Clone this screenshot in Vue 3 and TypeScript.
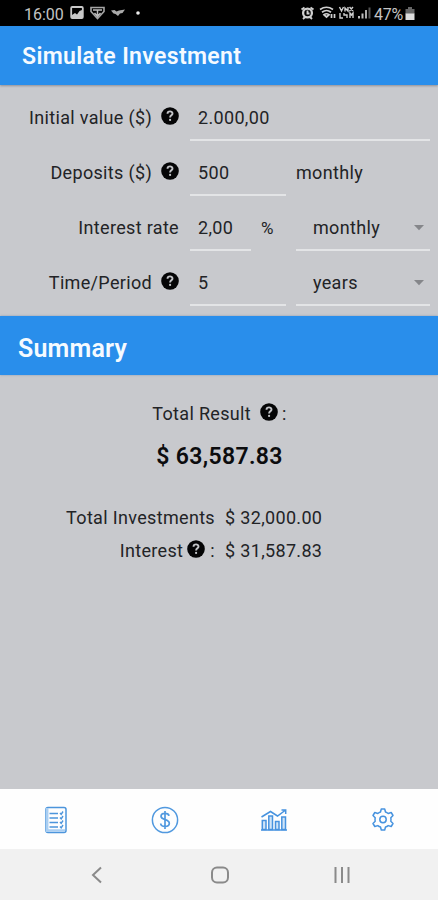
<script setup lang="ts">
import { h, type FunctionalComponent } from 'vue'

interface Field {
  label: string
  help: boolean
  value: string
  size: 'wide' | 'mid' | 'short'
  suffix?: string
  plain?: string
  select?: string
}

const fields: Field[] = [
  { label: 'Initial value ($)', help: true, value: '2.000,00', size: 'wide' },
  { label: 'Deposits ($)', help: true, value: '500', size: 'mid', plain: 'monthly' },
  { label: 'Interest rate', help: false, value: '2,00', size: 'short', suffix: '%', select: 'monthly' },
  { label: 'Time/Period', help: true, value: '5', size: 'mid', select: 'years' },
]

const HelpIcon: FunctionalComponent = () =>
  h('svg', { width: 18, height: 18, viewBox: '0 0 18 18' }, [
    h('circle', { cx: 9, cy: 9, r: 8.8, fill: '#050506' }),
    h('path', {
      d: 'M6.5 6.7C6.6 3.6 11.6 3.7 11.5 6.6C11.4 8.4 9.1 8.3 9.1 10.4',
      fill: 'none',
      stroke: '#c4c5c9',
      'stroke-width': 1.9,
    }),
    h('circle', { cx: 9.1, cy: 12.9, r: 1.1, fill: '#c4c5c9' }),
  ])
</script>

<template>
  <div class="screen">
    <div class="status">
      <span class="clock">16:00</span>
      <svg class="st-left" width="74" height="16" viewBox="0 0 74 16">
        <rect x="1.2" y="2" width="11.6" height="11" rx="1" fill="none" stroke="#c9c9c9" stroke-width="1.8" />
        <path d="M2 12.500V10L5 8L7 9.500L9.500 6L12 5V12.500Z" fill="#c9c9c9" />
        <path d="M21 2.500H34V6.500L27.500 13.500L21 6.500Z" fill="none" stroke="#a5a5a5" stroke-width="1.600" />
        <path d="M23 5H32M27.500 5V12M24.500 8L27.500 11.500L30.500 8" fill="none" stroke="#b9b9b9" stroke-width="1.500" />
        <path d="M41 5.500L44.500 5L46.500 6.500L49 5.500L55 4.500L52.500 8L50 8.500L48 11L45.500 9L43.500 8.500Z" fill="#aaa" />
        <circle cx="68" cy="8" r="1.800" fill="#ededed" />
      </svg>
      <svg class="st-right" width="72" height="16" viewBox="0 0 72 16">
        <g fill="none" stroke="#d0d0d0">
          <circle cx="7.500" cy="8" r="4.400" stroke-width="2.300" />
          <path d="M1.500 4.500L4.500 2.500M10.500 2.500L13.500 4.500M3 14L5 12M12 14L10 12M7.500 5.500V8.500H9.500" stroke-width="1.900" />
          <path d="M20 4.500Q26.500 0 33 4.500M22 7.200Q26.500 3.800 31 7.200M24 9.700Q26.500 7.800 29 9.700L26.500 12Z" stroke-width="1.700" />
          <path d="M31.500 9V13M34.500 9V13" stroke-width="1.700" />
          <path d="M39.500 2L41.500 6L43.500 2M45 6.500V3L48 6V2M49.500 2L53 6M53 2L49.500 6M40 8V13H43M44 8V10H47V13M50 13V8L51.500 10L53 8V13" stroke-width="1.400" />
        </g>
        <path d="M58 11H60V13.500H58ZM61.500 8.500H63.500V13.500H61.500Z" fill="#bdbdbd" />
        <path d="M65 5H67V13.500H65Z" fill="#aaa" />
        <path d="M68.500 2.500H70.500V13.500H68.500Z" fill="#555" />
      </svg>
      <span class="percent">47%</span>
      <svg class="battery" width="10" height="15" viewBox="0 0 10 15">
        <path d="M3 1H7V3H9.500V8H.5V3H3Z" fill="#666" />
        <path d="M.5 7.500H9.500V14H.5Z" fill="#dedede" />
      </svg>
    </div>

    <header class="appbar">Simulate Investment</header>

    <section class="form">
      <div v-for="f in fields" :key="f.label" class="row">
        <div class="label">
          <span>{{ f.label }}</span>
          <HelpIcon v-if="f.help" class="help" />
        </div>
        <div class="input" :class="f.size">{{ f.value }}</div>
        <div v-if="f.suffix" class="suffix">{{ f.suffix }}</div>
        <div v-if="f.plain" class="plain">{{ f.plain }}</div>
        <div v-if="f.select" class="select">
          <span>{{ f.select }}</span>
          <svg width="10" height="6" viewBox="0 0 10 6"><path d="M0 0H10L5 5.300Z" fill="#85868a" /></svg>
        </div>
      </div>
    </section>

    <h2 class="summary">Summary</h2>

    <main class="results">
      <div class="result-title"><span>Total Result</span><HelpIcon class="help" /><span>:</span></div>
      <div class="total">$ 63,587.83</div>
      <div class="line">
        <div class="name">Total Investments</div>
        <div class="amount">$ 32,000.00</div>
      </div>
      <div class="line">
        <div class="name"><span>Interest</span><HelpIcon class="help" /><span>:</span></div>
        <div class="amount">$ 31,587.83</div>
      </div>
    </main>

    <nav class="tabs">
      <div class="tab">
        <svg width="28" height="28" viewBox="0 0 28 28" fill="none" stroke="#4c95dc">
          <rect x="4" y="1.500" width="20" height="25" rx="2" stroke-width="1.500" />
          <path d="M5.200 2V26M5 24.500H23" stroke="#a9cef2" stroke-width="2.500" />
          <path d="M7.500 7.500H16M7.500 12H16M7.500 16.500H16M7.500 21H16" stroke-width="1.500" />
          <path d="M18 7L19.200 8.300L21 5.500M18 11.500L19.200 12.800L21 10M18 16L19.200 17.300L21 14.500M18 20.500L19.200 21.800L21 19" stroke-width="1.400" />
        </svg>
      </div>
      <div class="tab">
        <svg width="28" height="28" viewBox="0 0 28 28" fill="none" stroke="#5199df" stroke-width="1.500">
          <circle cx="14" cy="14" r="12.600" />
          <path d="M18 9.800C17.500 6.500 10 6.300 10 10.300C10 14.500 18.300 12.800 18.300 17.300C18.300 21.600 10 21.400 9.700 17.500M14 5V23" stroke-width="1.700" />
        </svg>
      </div>
      <div class="tab">
        <svg width="28" height="28" viewBox="0 0 28 28" fill="none" stroke="#4793df" stroke-width="1.500">
          <path d="M2.300 23.500V14.500H6V23.500ZM8.800 23.500V10H12.500V23.500ZM15.500 23.500V15.500H19V23.500ZM21.800 23.500V11H25.500V23.500Z" fill="#cfe4f8" />
          <path d="M1 24H27M1.500 11L10.500 5.500L17.500 10L25 4.500M21.500 4H25.700V8" />
        </svg>
      </div>
      <div class="tab">
        <svg width="28" height="28" viewBox="0 0 28 28" fill="none" stroke="#4793df" stroke-width="1.500" stroke-linejoin="round">
          <path d="M12.300 3H15.700L16.500 6Q18 6.500 19.200 7.500L22.200 6.500L24 9.500L21.800 11.700Q22.200 13.500 21.800 15.300L24 17.500L22.200 20.500L19.200 19.600Q18 20.600 16.500 21L15.700 24H12.300L11.500 21Q10 20.600 8.800 19.600L5.800 20.500L4 17.500L6.200 15.300Q5.800 13.500 6.200 11.700L4 9.500L5.800 6.500L8.800 7.500Q10 6.500 11.500 6Z" />
          <circle cx="14" cy="13.500" r="3.200" />
        </svg>
      </div>
    </nav>

    <div class="sysnav">
      <svg width="20" height="20" viewBox="0 0 20 20"><path d="M14 2.500L6 10L14 17.500" /></svg>
      <svg width="20" height="20" viewBox="0 0 20 20"><rect x="2" y="2.500" width="16" height="15" rx="5" /></svg>
      <svg width="20" height="20" viewBox="0 0 20 20"><path d="M3.500 2V18M10 2V18M16.500 2V18" /></svg>
    </div>
  </div>
</template>

<style>
body {
  margin: 0;
}
</style>

<style scoped>
.screen {
  width: 438px;
  height: 900px;
  display: flex;
  flex-direction: column;
  overflow: hidden;
  background: #c8c9cd;
  font-family: Roboto, "Liberation Sans", sans-serif;
  font-size: 18px;
  letter-spacing: 0.33px;
  color: #222326;
}
.status {
  flex: none;
  height: 26px;
  box-sizing: border-box;
  padding: 0 23px 0 24px;
  display: flex;
  align-items: center;
  background: #000;
  color: #c4c4c4;
  font-size: 16px;
  letter-spacing: 0;
}
.clock {
  width: 46px;
  padding-top: 2px;
}
.st-left {
  margin-right: auto;
}
.percent {
  width: 31px;
  margin-left: 2px;
  padding-top: 2px;
  letter-spacing: -0.2px;
}
.battery {
  flex: none;
}
.appbar {
  flex: none;
  height: 59px;
  line-height: 61px;
  padding-left: 22px;
  background: #298eeb;
  box-shadow: 0 1px 2px rgba(60, 60, 70, 0.4);
  color: #f5faff;
  font-size: 23px;
  font-weight: 600;
  letter-spacing: 0.35px;
}
.form {
  flex: none;
  height: 231px;
  box-sizing: border-box;
  padding-top: 1px;
}
.row {
  height: 55px;
  display: flex;
  line-height: 44px;
}
.label {
  width: 179px;
  margin-right: 11px;
  padding-top: 10px;
  display: flex;
  justify-content: flex-end;
}
.label .help {
  margin: 11px 0 0 9px;
}
.help {
  flex: none;
}
.input,
.select {
  box-sizing: border-box;
  height: 55px;
  padding: 10px 0 0 8px;
  border-bottom: 2px solid #e3e4e6;
}
.wide {
  width: 240px;
}
.mid {
  width: 96px;
}
.short {
  width: 61px;
}
.suffix {
  width: 45px;
  box-sizing: border-box;
  padding: 10px 0 0 10px;
  font-size: 17px;
}
.plain {
  padding: 10px 0 0 10px;
}
.select {
  width: 134px;
  padding: 10px 6px 0 17px;
  display: flex;
  align-items: center;
  justify-content: space-between;
}
.mid + .select {
  margin-left: 10px;
}
.summary {
  flex: none;
  height: 59px;
  line-height: 65px;
  margin: 0;
  padding-left: 18px;
  background: #298eeb;
  color: #f5faff;
  font-size: 25px;
  font-weight: 600;
  letter-spacing: 0.2px;
  box-shadow: 0 0 2px rgba(80, 110, 150, 0.5);
}
.results {
  flex: 1;
  padding-top: 26px;
}
.result-title {
  height: 26px;
  line-height: 26px;
  padding-left: 1px;
  display: flex;
  justify-content: center;
}
.result-title .help {
  margin: 2px 4px 0 9px;
}
.total {
  height: 42px;
  margin: 8px 0 16px;
  padding-left: 1px;
  line-height: 43px;
  text-align: center;
  font-size: 23px;
  font-weight: 600;
  color: #0c0c0e;
}
.line {
  height: 33px;
  line-height: 50px;
  display: flex;
}
.name {
  width: 215px;
  margin-right: 10px;
  display: flex;
  justify-content: flex-end;
}
.name .help {
  margin: 14px 5px 0 4px;
}
.tabs {
  flex: none;
  height: 60px;
  box-sizing: border-box;
  padding: 2px 0 0 1px;
  display: flex;
  background: #fefefe;
}
.tab {
  flex: 1;
  display: flex;
  align-items: center;
  justify-content: center;
}
.sysnav {
  flex: none;
  height: 51px;
  box-sizing: border-box;
  padding: 1px 86px 0 87px;
  display: flex;
  align-items: center;
  justify-content: space-between;
  background: #f1f1f1;
}
.sysnav svg {
  fill: none;
  stroke: #8a8a8a;
  stroke-width: 2;
}
</style>
